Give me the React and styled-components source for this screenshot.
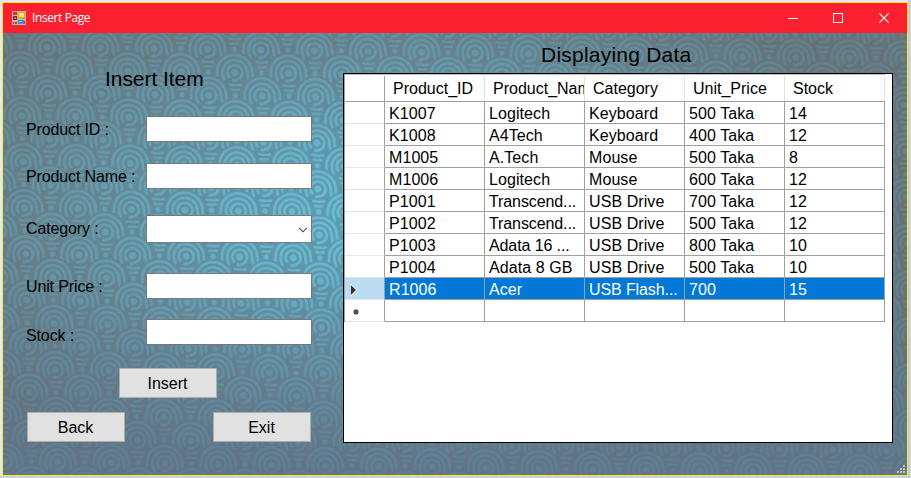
import React from "react";
import styled, { createGlobalStyle } from "styled-components";

const GlobalStyle = createGlobalStyle`
  *, *::before, *::after { box-sizing: border-box; }
  body { margin: 0; background: #e3e3e5; overflow: hidden; }
  button, input { font: inherit; }
`;

const Desktop = styled.div`
  width: 911px;
  height: 478px;
  padding: 2px 3px 2px 2px;
  background:
    linear-gradient(to right, transparent 908px, #c6c6c6 908px, #d8d8d8 911px),
    linear-gradient(to bottom, transparent 476px, #c8c8cc 476px, #d4d4d6 478px),
    #e8e8ec;
  font-family: "Liberation Sans", Arial, sans-serif;
  font-size: 16px;
  color: #000;
`;

const Window = styled.div`
  width: 906px;
  height: 474px;
  border: 1px solid #fbf01e;
  display: flex;
  flex-direction: column;
`;

const TitleBar = styled.header`
  height: 30px;
  flex: none;
  background: #fb2030;
  display: flex;
  align-items: center;
  padding-left: 9px;
  color: #fff;
`;

const Title = styled.span`
  font-family: "Open Sans", "Noto Sans", sans-serif;
  font-size: 12px;
  letter-spacing: -0.4px;
  line-height: 16px;
  margin-left: 6px;
  flex: 1;
`;

const Controls = styled.div`
  display: flex;
  height: 100%;
  padding-right: 1px;
`;

const ControlButton = styled.button`
  width: 45px;
  border: 0;
  padding: 0 0 1px;
  background: none;
  color: #fff;
  display: flex;
  align-items: center;
  justify-content: center;

  &:last-child {
    margin-left: 1px;
  }
`;

const Client = styled.main`
  position: relative;
  flex: 1;
  display: flex;
  overflow: hidden;
`;

const Wallpaper = styled.svg`
  position: absolute;
  inset: 0;
`;

const Form = styled.form`
  position: relative;
  width: 340px;
  flex: none;
  display: grid;
  grid-template-rows: 83px 47px 52px 58px 46px 49px 44px 30px;
  align-items: start;
`;

const Heading = styled.h2`
  margin: 0;
  font-weight: 400;
  font-size: 21px;
  line-height: 24px;
  letter-spacing: ${(p) => p.$spacing || "0"};
  white-space: nowrap;
`;

const FormHeading = styled(Heading)`
  padding: 34px 0 0 102px;
`;

const Field = styled.label`
  display: flex;
  align-items: flex-start;
  padding-left: 23px;
`;

const LabelText = styled.span`
  width: 120px;
  line-height: 18px;
  padding-top: ${(p) => p.$top}px;
  white-space: nowrap;
  letter-spacing: -0.13px;
`;

const TextBox = styled.input`
  width: 166px;
  height: 26px;
  border: 1px solid #7a7a7a;
  background: #fff;
  padding: 0 4px;
  outline: none;
`;

const ComboBox = styled.div`
  width: 166px;
  height: 28px;
  border: 1px solid #7a7a7a;
  background: #fff;
  display: flex;
  align-items: center;
  justify-content: flex-end;
  padding: 2px 3px 0 0;
`;

const ButtonRow = styled.div`
  display: flex;
  justify-content: ${(p) => (p.$spread ? "space-between" : "flex-start")};
  padding: ${(p) => (p.$spread ? "0 32px 0 24px" : "0 0 0 116px")};
`;

const PushButton = styled.button`
  width: 98px;
  height: 30px;
  border: 1px solid #adadad;
  background: #e1e1e1;
  color: #000;
  padding: 1px 1px 0 0;
  line-height: 28px;
  text-align: center;
`;

const DataPanel = styled.section`
  position: relative;
  width: 550px;
  display: flex;
  flex-direction: column;
`;

const DataHeading = styled(Heading)`
  height: 40px;
  padding: 10px 0 0 198px;
`;

const GridView = styled.div`
  height: 370px;
  border: 1px solid #000;
  background: #fff;
  display: flex;
  align-items: flex-start;
`;

const Table = styled.div`
  width: 541px;
  border-left: 1px solid #a0a0a0;
`;

const HeaderRow = styled.div`
  display: grid;
  grid-template-columns: 40px repeat(5, 100px);
  height: 28px;
  padding-top: 1px;
  border-bottom: 1px solid #a0a0a0;
  background: linear-gradient(#c4bebe, #c4bebe) 0 0 / 100% 1px no-repeat;
`;

const HeaderCell = styled.div`
  padding-left: 8px;
  margin-top: 1px;
  line-height: 25px;
  overflow: hidden;
  white-space: nowrap;
  border-right: 1px solid ${(p) => (p.$corner ? "#a0a0a0" : "#e2e2e2")};
`;

const Row = styled.div`
  display: grid;
  grid-template-columns: 40px repeat(5, 100px);
  height: 22px;
  background: ${(p) => (p.$selected ? "#0078d7" : "#fff")};
  color: ${(p) => (p.$selected ? "#fff" : "#000")};
`;

const RowMarker = styled.div`
  border-right: 1px solid #a0a0a0;
  border-bottom: 1px solid #e5e5e5;
  background: ${(p) => (p.$selected ? "#bcdcf4" : "#fff")};
  display: flex;
  align-items: center;
  padding: 2px 0 0 4px;
`;

const Cell = styled.div`
  border-right: 1px solid #a0a0a0;
  border-bottom: 1px solid #a0a0a0;
  padding: 0 4px;
  line-height: 23px;
  letter-spacing: ${(p) => (p.$tight ? "-0.1px" : "0.08px")};
  overflow: hidden;
  white-space: nowrap;
`;

const SizeGrip = styled.svg`
  position: absolute;
  right: 2px;
  bottom: 2px;
`;

const columns = ["Product_ID", "Product_Name", "Category", "Unit_Price", "Stock"];

const products = [
  ["K1007", "Logitech", "Keyboard", "500 Taka", "14"],
  ["K1008", "A4Tech", "Keyboard", "400 Taka", "12"],
  ["M1005", "A.Tech", "Mouse", "500 Taka", "8"],
  ["M1006", "Logitech", "Mouse", "600 Taka", "12"],
  ["P1001", "Transcend...", "USB Drive", "700 Taka", "12"],
  ["P1002", "Transcend...", "USB Drive", "500 Taka", "12"],
  ["P1003", "Adata 16 ...", "USB Drive", "800 Taka", "10"],
  ["P1004", "Adata 8 GB", "USB Drive", "500 Taka", "10"],
  ["R1006", "Acer", "USB Flash...", "700", "15"],
];

const selectedId = "R1006";

const TILE_W = 53.5;
const TILE_H = 46.1;

function waveCentres() {
  const list = [];
  for (let row = -3; row <= 4; row++) {
    const offset = row % 2 === 0 ? 0 : TILE_W / 2;
    for (let col = -2; col <= 2; col++) {
      list.push([col * TILE_W + offset, (row * TILE_H) / 2]);
    }
  }
  return list;
}

function WavePattern() {
  const centres = waveCentres();
  return (
    <Wallpaper width="904" height="442" viewBox="3 33 904 442">
      <defs>
        <pattern
          id="waves"
          width={TILE_W}
          height={TILE_H}
          patternUnits="userSpaceOnUse"
          patternTransform="matrix(1 0.014 0.026 1 47 47)"
        >
          {centres.map(([x, y], i) => (
            <g key={i} transform={`translate(${x} ${y})`} fill="none" stroke="#fff" strokeWidth="2.8">
              <circle r="21" fill="#000" stroke="none" />
              <path d="M-19 10Q-17.6 4 -17.6 0A17.6 17.6 0 0 1 17.6 0Q17.6 4 19 10" />
              <path d="M-10.5 8.5Q-12.4 4 -12.4 0A12.4 12.4 0 0 1 12.4 0Q12.4 4 14 9" />
              <path d="M-6 11.6Q0 13.4 7 12M-4.5 16.8Q0 17.8 5 16.8" strokeWidth="2.4" />
              <path d="M-5.2 5.4A7.5 7.5 0 1 1 5.2 5.4Q2 8 -3 7.6" />
              <circle r="3.4" fill="#fff" stroke="none" />
            </g>
          ))}
          {centres.map(([x, y], i) => (
            <circle key={i} cx={x} cy={y + 22.8} r="2.7" fill="#fff" />
          ))}
        </pattern>
        <mask id="waveMask" maskUnits="userSpaceOnUse" x="3" y="33" width="904" height="442">
          <rect x="3" y="33" width="904" height="442" fill="url(#waves)" />
        </mask>
        <radialGradient id="ground" gradientUnits="userSpaceOnUse" cx="0" cy="0" r="1" gradientTransform="translate(385 215) scale(520 260)">
          <stop offset="0" stopColor="#5d9fb4" />
          <stop offset="0.3" stopColor="#6094a9" />
          <stop offset="0.6" stopColor="#66838f" />
          <stop offset="1" stopColor="#677278" />
        </radialGradient>
        <radialGradient id="line" gradientUnits="userSpaceOnUse" cx="0" cy="0" r="1" gradientTransform="translate(385 215) scale(520 260)">
          <stop offset="0" stopColor="#6ecbdd" />
          <stop offset="0.3" stopColor="#6abacf" />
          <stop offset="0.62" stopColor="#649cae" />
          <stop offset="1" stopColor="#618490" />
        </radialGradient>
        <linearGradient id="dusk" x1="0" y1="0" x2="0" y2="1">
          <stop offset="0.5" stopColor="#5878a0" stopOpacity="0" />
          <stop offset="1" stopColor="#5878a0" stopOpacity="0.34" />
        </linearGradient>
      </defs>
      <rect x="3" y="33" width="904" height="442" fill="url(#ground)" />
      <rect x="3" y="33" width="904" height="442" fill="url(#line)" mask="url(#waveMask)" opacity="0.85" />
      <rect x="3" y="33" width="904" height="442" fill="url(#dusk)" />
    </Wallpaper>
  );
}

function AppIcon() {
  return (
    <svg width="14" height="14" viewBox="0 0 14 14" shapeRendering="crispEdges">
      <path d="M0 0H14V14H0Z" fill="#b9b5b0" />
      <path d="M1 1H5V4H1ZM1 11H2V13H1ZM3 11H5V13H3ZM12 10H13V13H12Z" fill="#fb2030" />
      <path d="M1 5H5V9H1Z" fill="#8c1f1f" />
      <path d="M2 6H4V8H2Z" fill="#cf6a5c" />
      <path d="M6 1H13V8H6Z" fill="#e9a51a" />
      <path d="M7 2H12V6H7Z" fill="#ffe27a" />
      <path d="M6 9H12V13H6Z" fill="#4a86dc" />
      <path d="M7 10H10V11H7Z" fill="#9cc4f6" />
    </svg>
  );
}

export default function App() {
  return (
    <>
      <GlobalStyle />
      <Desktop>
        <Window>
          <TitleBar>
            <AppIcon />
            <Title>Insert Page</Title>
            <Controls>
              <ControlButton aria-label="Minimize">
                <svg width="10" height="10" shapeRendering="crispEdges">
                  <path d="M0 5.5H10" stroke="currentColor" />
                </svg>
              </ControlButton>
              <ControlButton aria-label="Maximize">
                <svg width="10" height="10" shapeRendering="crispEdges">
                  <rect x="0.5" y="0.5" width="9" height="9" fill="none" stroke="currentColor" />
                </svg>
              </ControlButton>
              <ControlButton aria-label="Close">
                <svg width="10" height="10">
                  <path d="M0.3 0.3L9.7 9.7M9.7 0.3L0.3 9.7" stroke="currentColor" strokeWidth="1.1" />
                </svg>
              </ControlButton>
            </Controls>
          </TitleBar>
          <Client>
            <WavePattern />
            <Form>
              <FormHeading $spacing="-0.05px">Insert Item</FormHeading>
              <Field>
                <LabelText $top={5}>Product ID :</LabelText>
                <TextBox />
              </Field>
              <Field>
                <LabelText $top={5}>Product Name :</LabelText>
                <TextBox />
              </Field>
              <Field as="div">
                <LabelText $top={5}>Category :</LabelText>
                <ComboBox>
                  <svg width="10" height="6">
                    <path d="M1 0.8L5 4.8L9 0.8" fill="none" stroke="#444" strokeWidth="1.1" />
                  </svg>
                </ComboBox>
              </Field>
              <Field>
                <LabelText $top={5}>Unit Price :</LabelText>
                <TextBox />
              </Field>
              <Field>
                <LabelText $top={8}>Stock :</LabelText>
                <TextBox />
              </Field>
              <ButtonRow>
                <PushButton type="button">Insert</PushButton>
              </ButtonRow>
              <ButtonRow $spread>
                <PushButton type="button">Back</PushButton>
                <PushButton type="button">Exit</PushButton>
              </ButtonRow>
            </Form>
            <DataPanel>
              <DataHeading $spacing="0.22px">Displaying Data</DataHeading>
              <GridView>
                <Table>
                  <HeaderRow>
                    <HeaderCell $corner />
                    {columns.map((name) => (
                      <HeaderCell key={name}>{name}</HeaderCell>
                    ))}
                  </HeaderRow>
                  {products.map((product) => {
                    const selected = product[0] === selectedId;
                    return (
                      <Row key={product[0]} $selected={selected}>
                        <RowMarker $selected={selected}>
                          {selected && (
                            <svg width="9" height="12">
                              <path d="M1.8 1L7 6L1.8 11Z" fill="#333" stroke="#f3f8fc" strokeWidth="1.6" paintOrder="stroke" />
                            </svg>
                          )}
                        </RowMarker>
                        {product.map((value, i) => (
                          <Cell key={i} $tight={value.endsWith("...")}>{value}</Cell>
                        ))}
                      </Row>
                    );
                  })}
                  <Row>
                    <RowMarker>
                      <svg width="14" height="8">
                        <path d="M7 1V7M4 4H10M5 2L9 6M9 2L5 6" stroke="#444" strokeWidth="1.1" />
                      </svg>
                    </RowMarker>
                    {columns.map((name) => (
                      <Cell key={name} />
                    ))}
                  </Row>
                </Table>
              </GridView>
            </DataPanel>
            <SizeGrip width="8" height="8" shapeRendering="crispEdges">
              <path d="M6 0h2v2h-2zM3 3h2v2h-2zM6 3h2v2h-2zM0 6h2v2h-2zM3 6h2v2h-2zM6 6h2v2h-2z" fill="#c4c4c4" />
            </SizeGrip>
          </Client>
        </Window>
      </Desktop>
    </>
  );
}
